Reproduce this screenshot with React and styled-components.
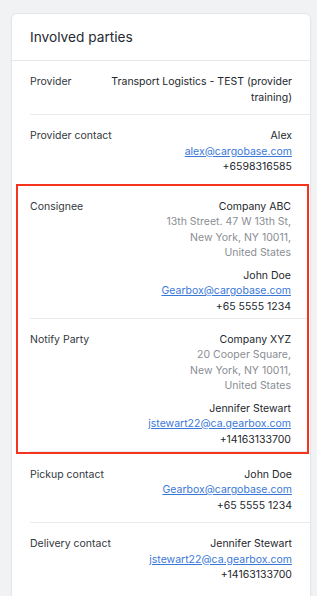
import React from 'react';
import styled, { createGlobalStyle } from 'styled-components';

const parties = [
  { label: 'Provider', lines: [{ text: 'Transport Logistics - TEST (provider training)' }] },
  {
    label: 'Provider contact',
    lines: [{ text: 'Alex' }, { text: 'alex@cargobase.com', link: true }, { text: '+6598316585' }],
  },
];

const highlighted = [
  {
    label: 'Consignee',
    company: 'Company ABC',
    address: ['13th Street. 47 W 13th St,', 'New York, NY 10011,', 'United States'],
    contact: ['John Doe', 'Gearbox@cargobase.com', '+65 5555 1234'],
  },
  {
    label: 'Notify Party',
    company: 'Company XYZ',
    address: ['20 Cooper Square,', 'New York, NY 10011,', 'United States'],
    contact: ['Jennifer Stewart', 'jstewart22@ca.gearbox.com', '+14163133700'],
  },
];

const contacts = [
  { label: 'Pickup contact', contact: ['John Doe', 'Gearbox@cargobase.com', '+65 5555 1234'] },
  { label: 'Delivery contact', contact: ['Jennifer Stewart', 'jstewart22@ca.gearbox.com', '+14163133700'] },
];

const Contact = ({ lines }) => (
  <>
    <Line>{lines[0]}</Line>
    <Link href="#">{lines[1]}</Link>
    <Line>{lines[2]}</Line>
  </>
);

export default function App() {
  return (
    <>
      <GlobalStyle />
      <Card>
        <Header>Involved parties</Header>
        <List>
          {parties.map((p, i) => (
            <Row key={p.label} $plain={i === parties.length - 1}>
              <Label>{p.label}</Label>
              <Value>
                {p.lines.map(l =>
                  l.link ? <Link key={l.text} href="#">{l.text}</Link> : <Line key={l.text}>{l.text}</Line>
                )}
              </Value>
            </Row>
          ))}
          <Highlight>
            {highlighted.map(p => (
              <Row key={p.label} $inner>
                <Label>{p.label}</Label>
                <Value>
                  <Line>{p.company}</Line>
                  {p.address.map(a => <Address key={a}>{a}</Address>)}
                  <ContactBlock>
                    <Contact lines={p.contact} />
                  </ContactBlock>
                </Value>
              </Row>
            ))}
          </Highlight>
          {contacts.map((p, i) => (
            <Row key={p.label} $plain={i === contacts.length - 1}>
              <Label>{p.label}</Label>
              <Value>
                <Contact lines={p.contact} />
              </Value>
            </Row>
          ))}
        </List>
      </Card>
    </>
  );
}

const GlobalStyle = createGlobalStyle`
  body {
    margin: 0;
    background: #f1f2f4;
    font-family: Inter, "Noto Sans", sans-serif;
    -webkit-font-smoothing: antialiased;
  }
`;

const Card = styled.div`
  margin: 13px 6px 3px 11px;
  padding-bottom: 8px;
  background: #fff;
  border: 1px solid #e4e6ea;
  border-radius: 6px;
  box-shadow: 0 1px 2px rgba(0, 0, 0, 0.04);
`;

const Header = styled.div`
  padding: 14px 18px;
  font-size: 13.7px;
  line-height: 18px;
  color: #262a30;
  border-bottom: 1px solid #e6e8ec;
`;

const List = styled.div`
  padding-left: 18px;
`;

const Row = styled.div`
  display: flex;
  justify-content: space-between;
  gap: 12px;
  padding: 13px ${p => (p.$inner ? '16px' : '18px')} ${p => (p.$inner ? '3.5px' : '9px')} 0;
  border-bottom: ${p => (p.$plain ? 'none' : '1px solid #e8eaee')};
  font-size: 10.5px;
  line-height: 15.5px;
`;

const Label = styled.div`
  flex-shrink: 0;
  color: #33373d;
  white-space: nowrap;
`;

const Value = styled.div`
  display: flex;
  flex-direction: column;
  align-items: flex-end;
  text-align: right;
  color: #24272c;
`;

const Line = styled.span``;

const Address = styled.span`
  color: #8a8e94;
`;

const ContactBlock = styled.div`
  display: flex;
  flex-direction: column;
  align-items: flex-end;
  margin-top: 7px;
`;

const Link = styled.a`
  color: #3a78d8;
  text-decoration: underline;
`;

const Highlight = styled.div`
  margin: 0 1px 0 -14px;
  padding-left: 12px;
  border: 2px solid #f5331f;
`;
